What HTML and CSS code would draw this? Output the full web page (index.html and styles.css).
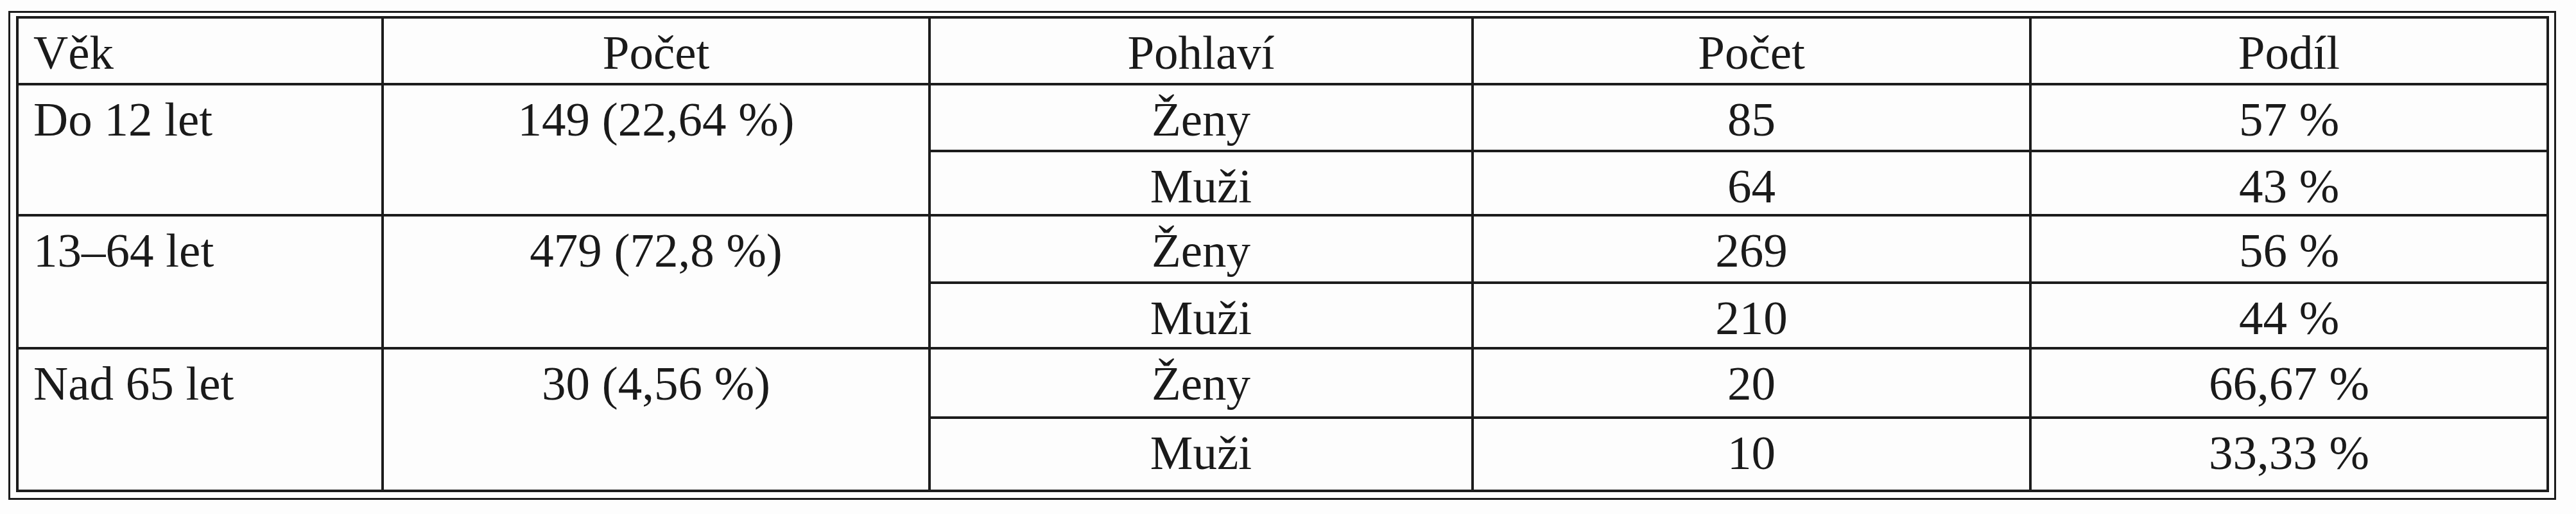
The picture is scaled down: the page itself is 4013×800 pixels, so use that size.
FILE: index.html
```html
<!DOCTYPE html>
<html lang="cs">
<head>
<meta charset="utf-8">
<title>Věk a pohlaví</title>
<link rel="stylesheet" href="styles.css">
</head>
<body>
<div class="frame">
  <div class="grid" role="table">
    <div class="cell head left">Věk</div>
    <div class="cell head">Počet</div>
    <div class="cell head">Pohlaví</div>
    <div class="cell head">Počet</div>
    <div class="cell head">Podíl</div>

    <div class="cell left span2">Do 12 let</div>
    <div class="cell span2">149 (22,64 %)</div>
    <div class="cell">Ženy</div>
    <div class="cell">85</div>
    <div class="cell">57 %</div>
    <div class="cell">Muži</div>
    <div class="cell">64</div>
    <div class="cell">43 %</div>

    <div class="cell left span2">13–64 let</div>
    <div class="cell span2">479 (72,8 %)</div>
    <div class="cell">Ženy</div>
    <div class="cell">269</div>
    <div class="cell">56 %</div>
    <div class="cell">Muži</div>
    <div class="cell">210</div>
    <div class="cell">44 %</div>

    <div class="cell left span2">Nad 65 let</div>
    <div class="cell span2">30 (4,56 %)</div>
    <div class="cell">Ženy</div>
    <div class="cell">20</div>
    <div class="cell">66,67 %</div>
    <div class="cell">Muži</div>
    <div class="cell">10</div>
    <div class="cell">33,33 %</div>
  </div>
</div>
</body>
</html>
```
FILE: styles.css
```css
html, body {
  margin: 0;
  padding: 0;
  background: #fdfdfd;
}

body {
  font-family: "Liberation Serif", "Times New Roman", serif;
  color: #1a1a1a;
}

.frame {
  display: inline-block;
  margin: 17px 0 0 13px;
  border: 3px solid #1c1c1c;
  padding: 5px 8px 9px 9px;
  background: #fdfdfd;
}

.grid {
  display: grid;
  grid-template-columns: 565px 848px 842px 865px 802px;
  grid-template-rows: 100px 100px 96px 101px 98px 104px 110px;
  gap: 4px;
  padding: 4px;
  background: #1c1c1c;
}

.cell {
  background: #fdfdfd;
  font-size: 75px;
  line-height: 83px;
  padding-top: 11px;
  text-align: center;
  white-space: nowrap;
}

.cell.left {
  text-align: left;
  padding-left: 23px;
}

.span2 {
  grid-row: span 2;
}
```
